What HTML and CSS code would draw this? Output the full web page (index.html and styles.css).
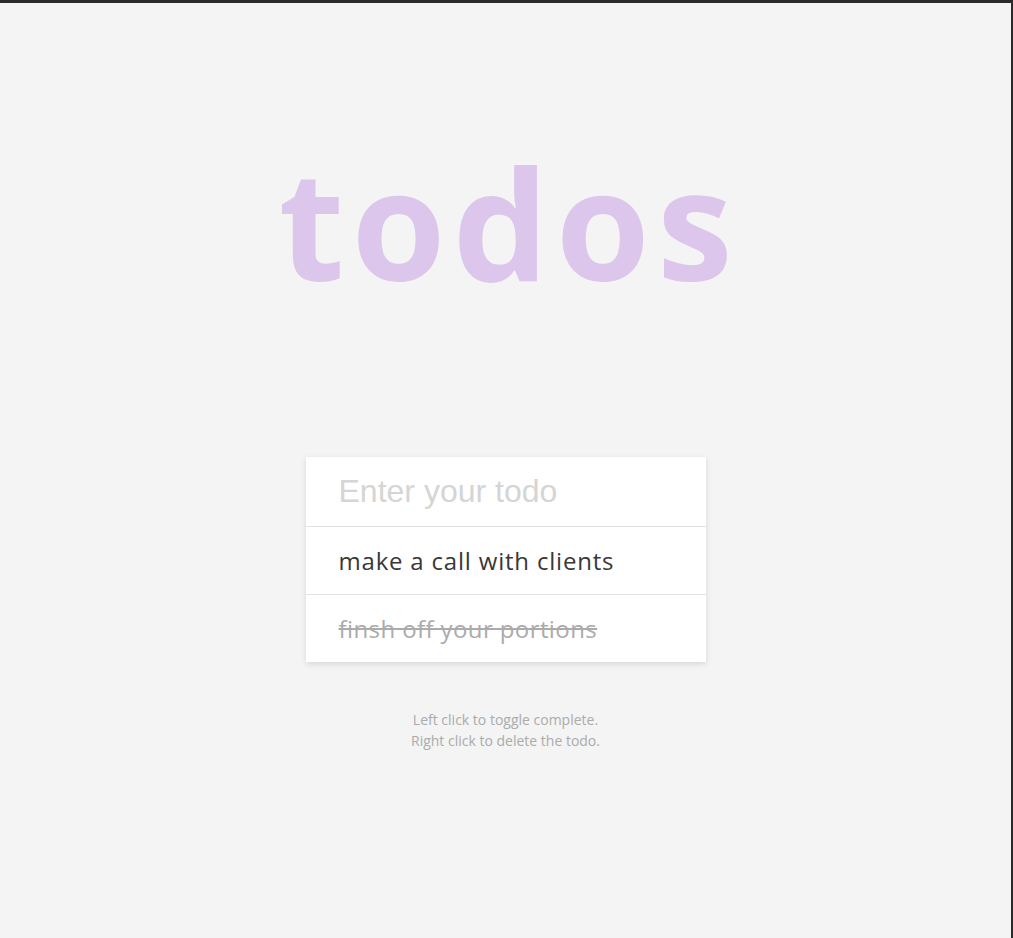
FILE: index.html
```html
<!DOCTYPE html>
<html lang="en">
<head>
<meta charset="utf-8">
<title>todos</title>
<link rel="stylesheet" href="styles.css">
</head>
<body>
<div class="frame">
  <main class="app">
    <h1 class="title">todos</h1>
    <section class="card">
      <div class="row input-row"><input class="todo-input" type="text" placeholder="Enter your todo"></div>
      <div class="row item">make a call with clients</div>
      <div class="row item done">finsh off your portions</div>
    </section>
    <p class="hint">Left click to toggle complete.<br>Right click to delete the todo.</p>
  </main>
</div>
</body>
</html>
```

FILE: styles.css
```css
html, body {
  margin: 0;
  padding: 0;
  height: 100%;
}
body {
  background: #2a2a2a;
  font-family: "Open Sans", sans-serif;
}
.frame {
  box-sizing: border-box;
  height: 100%;
  margin-top: 3px;
  margin-right: 2px;
  background: #f4f4f4;
  overflow: hidden;
}
.app {
  display: flex;
  flex-direction: column;
  align-items: center;
}
.title {
  margin: 120px 0 0;
  padding-left: 7px;
  font-family: "Open Sans", sans-serif;
  font-weight: 700;
  font-size: 152px;
  line-height: 200px;
  letter-spacing: 7px;
  color: #dcc6ec;
}
.card {
  margin-top: 134px;
  width: 400px;
  background: #fff;
  box-shadow: 0 2px 6px rgba(0, 0, 0, 0.12);
}
.row {
  box-sizing: border-box;
  height: 68px;
  padding: 0 33px;
  display: flex;
  align-items: center;
  border-top: 1px solid #e3e3e3;
  font-family: "Open Sans", sans-serif;
  font-size: 24px;
  letter-spacing: 0.8px;
  color: #383838;
}
.input-row {
  border-top: none;
  height: 69px;
}
.todo-input {
  border: none;
  outline: none;
  padding: 0;
  width: 100%;
  font-family: "Liberation Sans", Arial, sans-serif;
  font-size: 32px;
  letter-spacing: 0;
  color: #333;
  background: transparent;
}
.todo-input::placeholder {
  color: #d5d5d5;
}
.done {
  color: #ababab;
  letter-spacing: 0.4px;
  text-decoration: line-through;
}
.hint {
  margin: 47px 0 0;
  text-align: center;
  font-family: "Open Sans", sans-serif;
  font-size: 14px;
  line-height: 21px;
  color: #ababab;
}
```
